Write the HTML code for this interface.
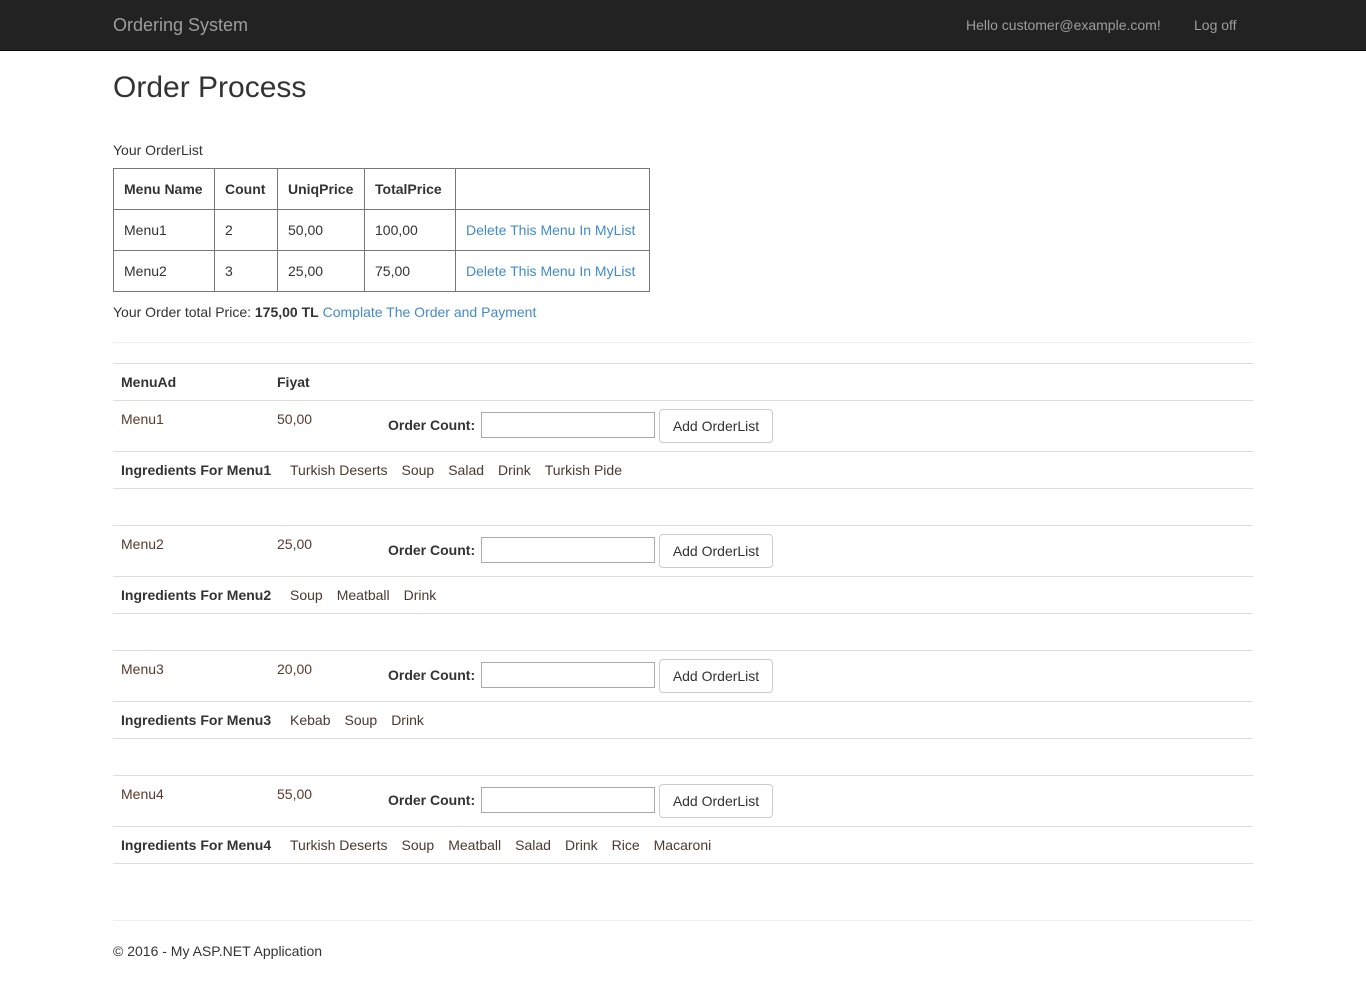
<!DOCTYPE html>
<html><head><meta charset="utf-8"><style>
*{margin:0;padding:0;box-sizing:border-box}
body{width:1366px;height:991px;position:relative;font-family:"Liberation Sans",sans-serif;font-size:14px;color:#333;background:#fff;overflow:hidden}
.a{position:absolute;white-space:nowrap;line-height:20px}
.nav{position:absolute;left:0;top:0;width:1366px;height:51px;background:#222;border-bottom:1px solid #080808}
.hl{position:absolute;left:113px;width:1140px;height:1px;background:#ddd}
.b{font-weight:bold}
.lnk{color:#428bca}
.br{color:#5a3a2a}
.ing span{margin-left:14px;color:#4a3a30}
table{position:absolute;left:113px;top:168px;border-collapse:collapse}
td{border:1px solid #777;height:41px;padding:0 10px;vertical-align:middle}
table tr:first-child td{font-weight:bold}
input{position:absolute;width:174px;height:26px;border:1px solid #aaa}
.btn{position:absolute;width:114px;height:34px;border:1px solid #ccc;border-radius:4px;line-height:32px;text-align:center;font-size:14px}
</style></head><body>
<div class="nav"></div>
<div class="a" style="left:113px;top:15px;font-size:18px;color:#9d9d9d">Ordering System</div>
<div class="a" style="left:966px;top:15px;color:#9d9d9d">Hello customer@example.com!</div>
<div class="a" style="left:1194px;top:15px;color:#9d9d9d">Log off</div>
<div class="a" style="left:113px;top:70px;font-size:30px;line-height:36px">Order Process</div>
<div class="a" style="left:113px;top:140px">Your OrderList</div>
<table>
<tr><td style="width:101px">Menu Name</td><td style="width:63px">Count</td><td style="width:87px">UniqPrice</td><td style="width:91px">TotalPrice</td><td style="width:194px"></td></tr>
<tr><td>Menu1</td><td>2</td><td>50,00</td><td>100,00</td><td class="lnk">Delete This Menu In MyList</td></tr>
<tr><td>Menu2</td><td>3</td><td>25,00</td><td>75,00</td><td class="lnk">Delete This Menu In MyList</td></tr>
</table>
<div class="a" style="left:113px;top:302px">Your Order total Price: <b>175,00 TL</b> <span class="lnk">Complate The Order and Payment</span></div>
<div class="hl" style="top:342px;background:#eee"></div>
<div class="hl" style="top:363px"></div>
<div class="a b" style="left:121px;top:372px">MenuAd</div>
<div class="a b" style="left:277px;top:372px">Fiyat</div>

<div class="hl" style="top:400px"></div>
<div class="a br" style="left:121px;top:409px">Menu1</div><div class="a br" style="left:277px;top:409px">50,00</div>
<div class="a b" style="left:388px;top:415px">Order Count:</div><input style="left:481px;top:412px"><div class="btn" style="left:659px;top:409px">Add OrderList</div>
<div class="hl" style="top:451px"></div>
<div class="a ing" style="left:121px;top:460px"><b style="display:inline-block;width:155px">Ingredients For Menu1</b><span>Turkish Deserts</span><span>Soup</span><span>Salad</span><span>Drink</span><span>Turkish Pide</span></div>
<div class="hl" style="top:488px"></div>

<div class="hl" style="top:525px"></div>
<div class="a br" style="left:121px;top:534px">Menu2</div><div class="a br" style="left:277px;top:534px">25,00</div>
<div class="a b" style="left:388px;top:540px">Order Count:</div><input style="left:481px;top:537px"><div class="btn" style="left:659px;top:534px">Add OrderList</div>
<div class="hl" style="top:576px"></div>
<div class="a ing" style="left:121px;top:585px"><b style="display:inline-block;width:155px">Ingredients For Menu2</b><span>Soup</span><span>Meatball</span><span>Drink</span></div>
<div class="hl" style="top:613px"></div>

<div class="hl" style="top:650px"></div>
<div class="a br" style="left:121px;top:659px">Menu3</div><div class="a br" style="left:277px;top:659px">20,00</div>
<div class="a b" style="left:388px;top:665px">Order Count:</div><input style="left:481px;top:662px"><div class="btn" style="left:659px;top:659px">Add OrderList</div>
<div class="hl" style="top:701px"></div>
<div class="a ing" style="left:121px;top:710px"><b style="display:inline-block;width:155px">Ingredients For Menu3</b><span>Kebab</span><span>Soup</span><span>Drink</span></div>
<div class="hl" style="top:738px"></div>

<div class="hl" style="top:775px"></div>
<div class="a br" style="left:121px;top:784px">Menu4</div><div class="a br" style="left:277px;top:784px">55,00</div>
<div class="a b" style="left:388px;top:790px">Order Count:</div><input style="left:481px;top:787px"><div class="btn" style="left:659px;top:784px">Add OrderList</div>
<div class="hl" style="top:826px"></div>
<div class="a ing" style="left:121px;top:835px"><b style="display:inline-block;width:155px">Ingredients For Menu4</b><span>Turkish Deserts</span><span>Soup</span><span>Meatball</span><span>Salad</span><span>Drink</span><span>Rice</span><span>Macaroni</span></div>
<div class="hl" style="top:863px"></div>

<div class="hl" style="top:920px;background:#eee"></div>
<div class="a" style="left:113px;top:941px">© 2016 - My ASP.NET Application</div>
</body></html>
